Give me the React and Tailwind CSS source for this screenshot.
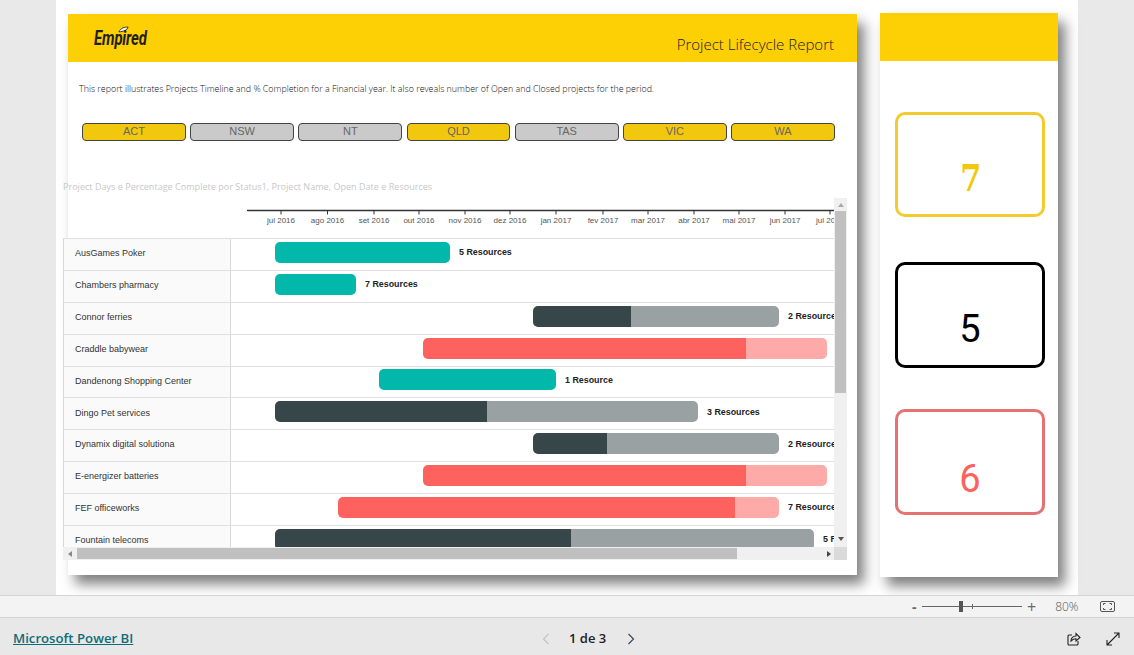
import React from "react";

const regions = [
  ["ACT", true], ["NSW", false], ["NT", false], ["QLD", true], ["TAS", false], ["VIC", true], ["WA", true],
];

const ticks = [
  [218, "jul 2016"], [264.5, "ago 2016"], [311, "set 2016"], [356, "out 2016"], [402, "nov 2016"], [447, "dez 2016"],
  [493, "jan 2017"], [540, "fev 2017"], [585, "mar 2017"], [631, "abr 2017"], [676, "mai 2017"], [722, "jun 2017"], [767, "jul 2017"],
];

const TEAL = ["#01b8aa", "#01b8aa"];
const DARK = ["#374649", "#9aa1a2"];
const RED = ["#fd625e", "#feaaa8"];

const rows = [
  ["AusGames Poker", 275, 450, 450, TEAL, "5 Resources"],
  ["Chambers pharmacy", 275, 356, 356, TEAL, "7 Resources"],
  ["Connor ferries", 533, 631, 779, DARK, "2 Resources"],
  ["Craddle babywear", 423, 746, 827, RED, ""],
  ["Dandenong Shopping Center", 379, 556, 556, TEAL, "1 Resource"],
  ["Dingo Pet services", 275, 487, 698, DARK, "3 Resources"],
  ["Dynamix digital solutiona", 533, 607, 779, DARK, "2 Resources"],
  ["E-energizer batteries", 423, 746, 827, RED, ""],
  ["FEF officeworks", 338, 735, 779, RED, "7 Resources"],
  ["Fountain telecoms", 275, 571, 814, DARK, "5 Resources"],
];

function Row({ name, x0, x1, x2, colors, label }) {
  return (
    <div className="flex h-[31.875px] shrink-0 border-t border-[#e0e0e0]">
      <div className="flex w-[168px] shrink-0 items-center border-x border-[#d8d8d8] bg-[#fafafa] pb-[1px] pl-[11px] font-['Liberation_Sans',sans-serif] text-[9px] text-[#333]">
        {name}
      </div>
      <div className="flex min-w-0 flex-1 items-center overflow-hidden whitespace-nowrap pb-[4px]">
        <div className="flex h-[21px] shrink-0 overflow-hidden rounded-[5px]" style={{ marginLeft: x0 - 231, width: x2 - x0 }}>
          <div className="h-full" style={{ width: x1 - x0, backgroundColor: colors[0] }} />
          <div className="h-full flex-1" style={{ backgroundColor: colors[1] }} />
        </div>
        {label && (
          <span className="ml-[9px] mt-[1px] font-['Liberation_Sans',sans-serif] text-[8.9px] font-bold text-[#222]">{label}</span>
        )}
      </div>
    </div>
  );
}

function Kpi({ value, box, color, font, pad }) {
  return (
    <div className={`flex w-[150px] items-end justify-center rounded-[10px] border-[3px] bg-white ${box} ${color} ${font} ${pad}`}>
      {value}
    </div>
  );
}

export default function App() {
  return (
    <div className="flex h-[655px] w-[1134px] flex-col overflow-hidden bg-[#e9e9e9] font-['Open_Sans',sans-serif]">
      <div className="h-[595px] shrink-0 overflow-hidden">
        <div className="ml-[56px] flex h-[595px] w-[1022px] items-start gap-[23px] bg-white pl-[12px]">
          {/* Report card */}
          <div className="mt-[14px] flex h-[561px] w-[789px] shrink-0 flex-col bg-white shadow-[7px_9px_12px_rgba(0,0,0,0.5)]">
            <div className="flex h-[48px] shrink-0 items-start justify-between bg-[#fdcf05] pl-[26px] pr-[23px]">
              <div className="relative mt-[11px]">
                <svg className="absolute left-[24px] top-[1px]" width="11" height="7" viewBox="0 0 12 7">
                  <path d="M1 6 C3 2 7 0.5 11 1 C10 4 6 6 1 6 Z" fill="#fff" stroke="#222" strokeWidth="1" />
                </svg>
                <span className="inline-block origin-left scale-x-[0.71] font-['Roboto',sans-serif] text-[21px] font-bold italic leading-[26px] tracking-[-0.2px] text-[#1f1f1f]">
                  Empired
                </span>
              </div>
              <span className="mt-[18px] text-[15px] font-light leading-[24px] text-[#222]">Project Lifecycle Report</span>
            </div>

            <p className="ml-[11px] mt-[20px] h-[14px] text-[8.9px] font-light leading-[14px] text-[#111]">
              This report illustrates Projects Timeline and % Completion for a Financial year. It also reveals number of Open and Closed projects for the period.
            </p>

            <div className="ml-[14px] mt-[27px] grid w-[753px] grid-cols-7 gap-x-[4.2px]">
              {regions.map(([name, on]) => (
                <div
                  key={name}
                  className={`flex h-[18px] items-center justify-center rounded-[4px] border border-[#444] pb-[1px] font-['Liberation_Sans',sans-serif] text-[11px] text-[#666] ${on ? "bg-[#f2c80f]" : "bg-[#cacaca]"}`}
                >
                  {name}
                </div>
              ))}
            </div>

            <p className="-ml-[5px] mt-[39px] h-[14px] whitespace-nowrap text-[9.07px] leading-[14px] text-[#c8c8c8]">
              Project Days e Percentage Complete por Status1, Project Name, Open Date e Resources
            </p>

            {/* Chart visual */}
            <div className="-ml-[5px] mt-[4px] flex w-[784px] flex-col">
              <div className="flex h-[349px]">
                <div className="flex w-[771px] shrink-0 flex-col overflow-hidden">
                  <svg className="h-[40px] w-[771px] shrink-0" viewBox="0 0 771 40">
                    <line x1="184" y1="12.5" x2="771" y2="12.5" stroke="#333" strokeWidth="1.5" />
                    {ticks.map(([x, t]) => (
                      <g key={t}>
                        <line x1={x} y1="12" x2={x} y2="16.5" stroke="#333" strokeWidth="1" />
                        <text x={x} y="25" textAnchor="middle" fontSize="8" fill="#555" fontFamily="Liberation Sans, sans-serif">
                          {t}
                        </text>
                      </g>
                    ))}
                  </svg>
                  {rows.map((r) => (
                    <Row key={r[0]} name={r[0]} x0={r[1]} x1={r[2]} x2={r[3]} colors={r[4]} label={r[5]} />
                  ))}
                </div>
                <div className="flex w-[13px] shrink-0 flex-col bg-[#f0f0f0]">
                  <div className="flex h-[13px] shrink-0 items-center justify-center">
                    <div className="h-0 w-0 border-x-[3px] border-b-[4px] border-x-transparent border-b-[#aaa]" />
                  </div>
                  <div className="mx-auto h-[182px] w-[11px] bg-[#c0c0c0]" />
                  <div className="mt-auto flex h-[17px] items-center justify-center">
                    <div className="h-0 w-0 border-x-[3px] border-t-[4px] border-x-transparent border-t-[#555]" />
                  </div>
                </div>
              </div>
              <div className="flex h-[13px] w-[784px]">
                <div className="flex h-[13px] w-[771px] items-center bg-[#f0f0f0]">
                  <div className="flex w-[14px] shrink-0 justify-center">
                    <div className="h-0 w-0 border-y-[3px] border-r-[4px] border-y-transparent border-r-[#888]" />
                  </div>
                  <div className="h-[11px] w-[660px] bg-[#c0c0c0]" />
                  <div className="ml-auto mr-[3px] h-0 w-0 border-y-[3px] border-l-[4px] border-y-transparent border-l-[#444]" />
                </div>
                <div className="h-[13px] w-[13px] bg-[#dadada]" />
              </div>
            </div>
          </div>

          {/* KPI card */}
          <div className="mt-[13px] flex h-[564px] w-[178px] shrink-0 flex-col bg-white shadow-[7px_9px_12px_rgba(0,0,0,0.5)]">
            <div className="h-[48px] shrink-0 bg-[#fdcf05]" />
            <div className="ml-[15px] mt-[51px] flex flex-col">
              <Kpi
                value={<span className="ml-[2px] inline-block scale-x-[0.82]">7</span>}
                box="h-[105px] border-[#f4cb2f]"
                color="text-[#f2c80f]"
                font="font-['DejaVu_Serif',serif] text-[37px] leading-[44px] font-bold"
                pad="pb-[14px]"
              />
              <div className="h-[45px]" />
              <Kpi
                value="5"
                box="h-[106px] border-black"
                color="text-black"
                font="font-['Roboto',sans-serif] text-[38px] leading-[44px] font-[450]"
                pad="pb-[14px]"
              />
              <div className="h-[41px]" />
              <Kpi
                value="6"
                box="h-[106px] border-[#e57373]"
                color="text-[#fd625e]"
                font="font-['Roboto',sans-serif] text-[38px] leading-[44px] font-normal"
                pad="pb-[11px]"
              />
            </div>
          </div>
        </div>
      </div>

      {/* Zoom bar */}
      <div className="flex h-[23px] shrink-0 items-center border-y border-[#d4d4d4] bg-[#f3f3f3] text-[#666]">
        <span className="ml-[912px] w-[10px] text-[14px] font-bold leading-none">-</span>
        <div className="relative h-px w-[100px] bg-[#666]">
          <div className="absolute left-[37px] top-[-5px] h-[11px] w-[4px] bg-[#555]" />
          <div className="absolute left-[50px] top-[-2px] h-[5px] w-px bg-[#666]" />
        </div>
        <span className="ml-[5px] text-[16px] leading-none">+</span>
        <span className="ml-[19px] text-[12px] font-light text-[#555]">80%</span>
        <svg className="ml-[21px]" width="15" height="11" viewBox="0 0 15 11" fill="none" stroke="#555" strokeWidth="1">
          <rect x="0.5" y="0.5" width="14" height="10" rx="1.5" />
          <path d="M3.5 4V2.5H5.5M9.5 2.5H11.5V4M11.5 7V8.5H9.5M5.5 8.5H3.5V7" />
        </svg>
      </div>

      {/* Bottom bar */}
      <div className="flex flex-1 items-center bg-[#e8e8e8] pl-[13px] pt-[4px]">
        <a className="w-[120px] whitespace-nowrap text-[13.2px] font-semibold text-[#0f6d78] underline">Microsoft Power BI</a>
        <svg className="ml-[409px]" width="8" height="12" viewBox="0 0 8 12" fill="none" stroke="#c4c4c4" strokeWidth="1.2">
          <path d="M6.5 1 L1.5 6 L6.5 11" />
        </svg>
        <span className="ml-[19px] text-[13px] font-semibold text-[#222]">1 de 3</span>
        <svg className="ml-[21px]" width="8" height="12" viewBox="0 0 8 12" fill="none" stroke="#3a4a5a" strokeWidth="1.2">
          <path d="M1.5 1 L6.5 6 L1.5 11" />
        </svg>
        <svg className="ml-[432px]" width="14" height="14" viewBox="0 0 14 14" fill="none" stroke="#222" strokeWidth="1.1">
          <path d="M5 3H2a1 1 0 0 0-1 1v8a1 1 0 0 0 1 1h8a1 1 0 0 0 1-1v-3" />
          <path d="M4 9c0-3 2-5 5-5V1.5L13 5.5 9 9V6.8C7 6.8 5.5 7.5 4 9Z" />
        </svg>
        <svg className="ml-[25px]" width="14" height="14" viewBox="0 0 14 14" fill="none" stroke="#222" strokeWidth="1.1">
          <path d="M1 13 L13 1 M8 1 H13 V6 M1 8 V13 H6" />
        </svg>
      </div>
    </div>
  );
}
